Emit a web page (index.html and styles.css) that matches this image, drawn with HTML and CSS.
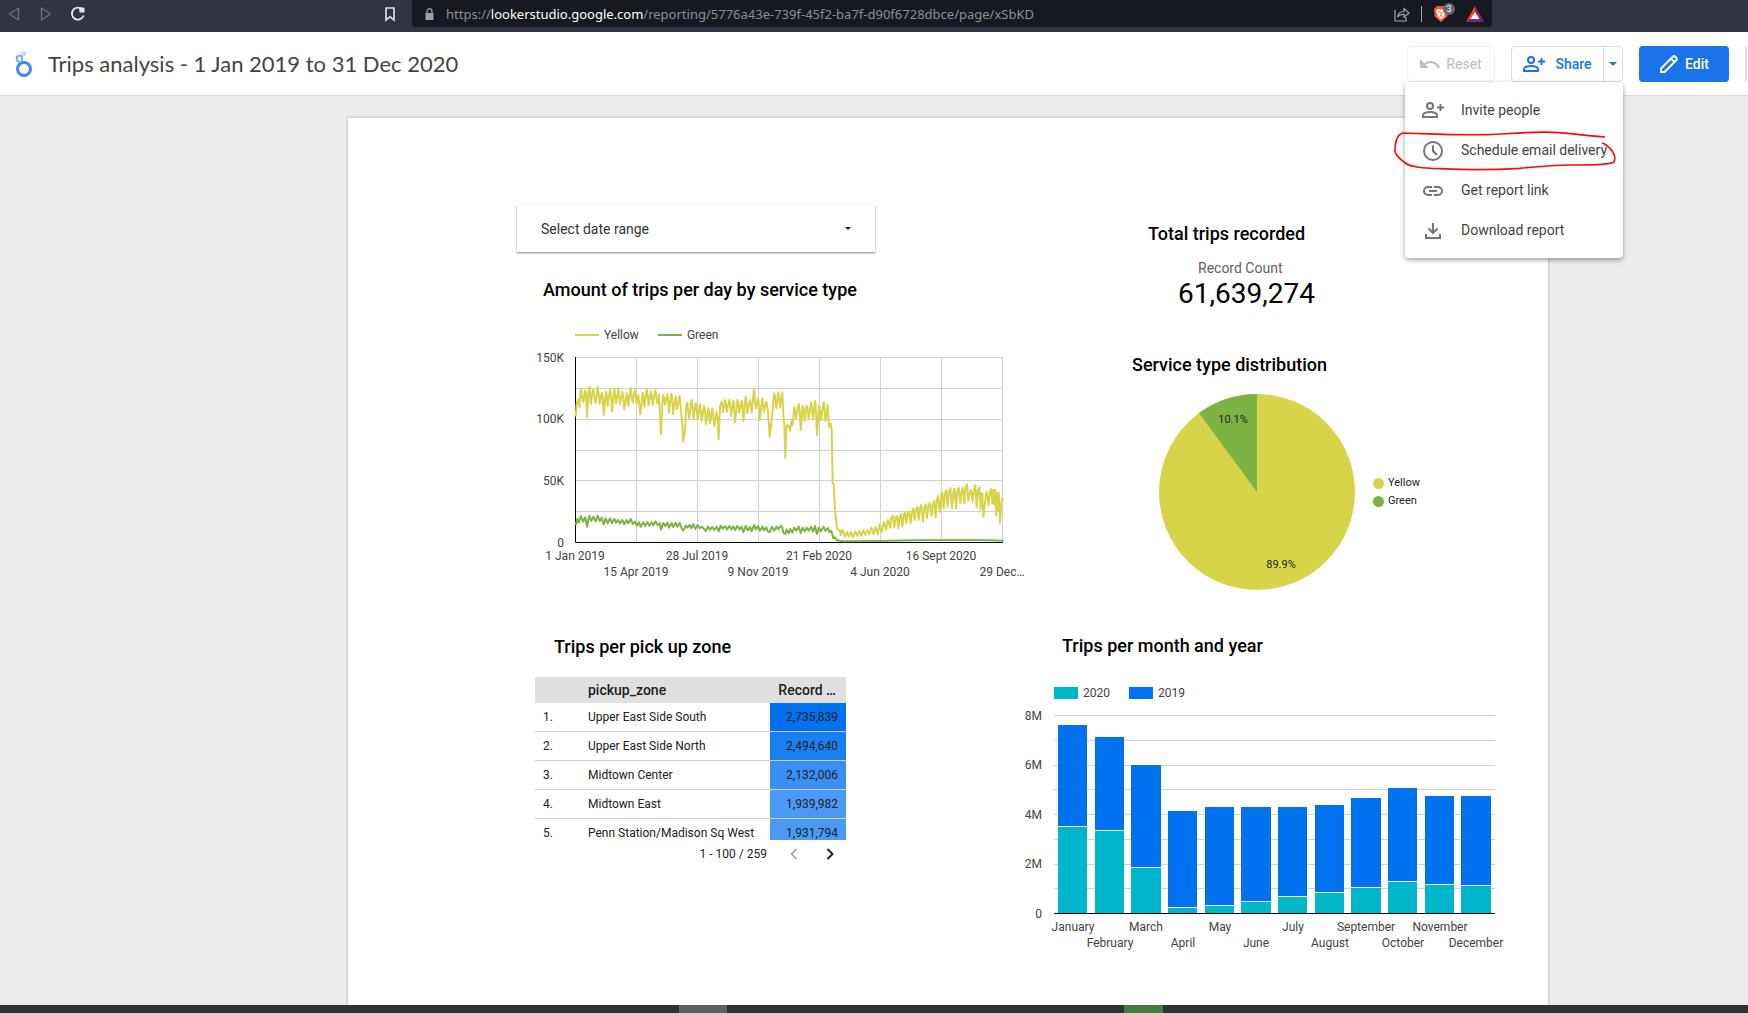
FILE: index.html
```html
<!DOCTYPE html>
<html lang="en">
<head>
<meta charset="utf-8">
<title>Trips analysis - 1 Jan 2019 to 31 Dec 2020</title>
<link rel="stylesheet" href="styles.css">
</head>
<body>
<div class="browser-bar">
  <div class="nav-tools">
    <button class="nav-btn" aria-label="Back"><svg width="12" height="16" viewBox="0 0 12 16"><path d="M10.500 2v12L1.500 8z" fill="none" stroke="#6d6f7c" stroke-width="1.400" stroke-linejoin="round"/></svg></button>
    <button class="nav-btn nav-forward" aria-label="Forward"><svg width="12" height="16" viewBox="0 0 12 16"><path d="M1.500 2v12l9-6z" fill="none" stroke="#6d6f7c" stroke-width="1.400" stroke-linejoin="round"/></svg></button>
    <button class="nav-btn nav-reload" aria-label="Reload"><svg width="16" height="16" viewBox="0 0 16 16"><path d="M12.300 3.500A6 6 0 1 0 13.600 9.500" fill="none" stroke="#e6e6ea" stroke-width="1.900"/><path d="M9 1.200L14.500 1.800V6.500H9.500z" fill="#e6e6ea"/></svg></button>
    <button class="nav-btn nav-bookmark" aria-label="Bookmark"><svg width="12" height="16" viewBox="0 0 12 16"><path d="M2 2h8v12l-4-3.200L2 14z" fill="none" stroke="#dcdce2" stroke-width="1.700"/></svg></button>
  </div>
  <div class="address">
    <svg width="9" height="12" viewBox="0 0 9 12"><path d="M0.500 5h8v7h-8z" fill="#9b9da8"/><path d="M2 5.500V3a2.500 2.300 0 0 1 5 0v2.500" fill="none" stroke="#9b9da8" stroke-width="1.300"/></svg>
    <span class="url">https://<b>lookerstudio.google.com</b>/reporting/5776a43e-739f-45f2-ba7f-d90f6728dbce/page/xSbKD</span>
    <svg width="16" height="16" viewBox="0 0 16 16" fill="none" stroke="#a4a6ae" stroke-width="1.200"><path d="M1 4v11h11v-4"/><path d="M3.500 11C4 7.500 6.500 5.500 10 5.500V2.500L15 7l-5 4.200V8.400C7 8.200 5 9 3.500 11z"/></svg>
    <span class="divider"></span>
    <span class="shield">
      <svg width="16" height="18" viewBox="0 0 16 18"><path d="M4 1h8l3 3-.7 7.500L8 17 1.700 11.500 1 4z" fill="#fb542b"/><path d="M3.500 4.500L6 4l2 .5L10 4l2.500.5.5 2.500-2 2.500L12 11 8 14.500 4 11l1-1.500L3 7z" fill="#fff"/><path d="M4.500 6.500l2.500.8M11.500 6.500L9 7.300M8 7v3M6.500 11.500L8 10.500l1.500 1" stroke="#fb542b" fill="none"/></svg>
      <span class="badge">3</span>
    </span>
    <svg class="bat" width="18" height="16" viewBox="0 0 18 16"><path d="M9 0L0 16l9-6z" fill="#ff4724"/><path d="M9 0l9 16-9-6z" fill="#9e1f63"/><path d="M0 16h18l-9-6z" fill="#662d91"/><path d="M9 6l4.500 7h-9z" fill="#fff"/></svg>
  </div>
</div>

<header class="app-header">
  <svg class="logo" width="18" height="28" viewBox="0 0 18 28" fill="none"><circle cx="9" cy="19" r="6.500" stroke="#4285f4" stroke-width="3"/><path d="M5.500 11.500A3 3 0 1 1 7.200 7.200l-.5 4" stroke="#669df6" stroke-width="1.700"/><circle cx="8.700" cy="3.500" r="1.700" stroke="#aecbfa" stroke-width="1.300"/></svg>
  <h1>Trips analysis - 1 Jan 2019 to 31 Dec 2020</h1>
  <div class="actions">
    <button class="btn reset" disabled>
      <svg width="20" height="12" viewBox="0 0 20 12"><path d="M0 1v9h9L5.700 6.700A8 8 0 0 1 18 10.500l2-.7A10 10 0 0 0 4.200 5.200z" fill="#bdbdbd"/></svg>Reset</button>
    <div class="split">
      <button class="btn share"><svg width="22" height="18" viewBox="0 0 22 18" fill="none" stroke="#1a73e8" stroke-width="2"><circle cx="8" cy="5" r="3"/><path d="M1 16v-1.500C1 12 5 11 8 11s7 1 7 3.500V16zM18.500 3v7M15 6.500h7"/></svg>Share</button>
      <button class="btn share-more" aria-label="More share options"><svg width="8" height="4" viewBox="0 0 8 4"><path d="M0 0h8L4 4z" fill="#1a73e8"/></svg></button>
      <div class="menu" role="menu">
        <button class="menu-item" role="menuitem"><svg width="22" height="22" viewBox="0 0 22 22" fill="none" stroke="#757575" stroke-width="2"><circle cx="8" cy="7" r="3"/><path d="M1 18v-1.500C1 14 5 13 8 13s7 1 7 3.500V18zM18.500 5v7M15 8.500h7"/></svg>Invite people</button>
        <button class="menu-item" role="menuitem"><svg width="22" height="22" viewBox="0 0 22 22" fill="none" stroke="#757575" stroke-width="2"><circle cx="11" cy="12" r="9"/><path d="M11 6.500V12l4 4"/></svg>Schedule email delivery</button>
        <button class="menu-item" role="menuitem"><svg width="22" height="22" viewBox="0 0 22 22" fill="none" stroke="#757575" stroke-width="2"><path d="M10 8H6a4 4 0 0 0 0 8h4M12 8h4a4 4 0 0 1 0 8h-4M7 12h8"/></svg>Get report link</button>
        <button class="menu-item" role="menuitem"><svg width="22" height="22" viewBox="0 0 22 22" fill="none" stroke="#757575" stroke-width="2"><path d="M11 4v10M6.500 9.500L11 14l4.500-4.500M4 15v4h14v-4"/></svg>Download report</button>
        <svg class="scribble" width="227" height="43" viewBox="160 385 681 129" fill="none" stroke="#f80b0b" stroke-width="5" stroke-linecap="round"><path d="M795 412C740 408 690 400 640 398C560 395 500 404 440 405C350 407 260 402 190 400C172 404 166 430 166 455C168 470 185 480 197 490C215 503 250 505 300 507C400 512 480 510 540 506C600 500 640 496 690 496C740 496 800 498 822 488C830 475 822 455 810 445C800 435 795 432 789 430"/></svg>
      </div>
    </div>
    <button class="btn edit"><svg width="20" height="20" viewBox="0 0 20 20"><path d="M2 18v-3.500L14 2.500a1.500 1.500 0 0 1 2 0l1.500 1.500a1.500 1.500 0 0 1 0 2L5.500 18zM12 4.500L15.500 8" fill="none" stroke="#fff" stroke-width="2" stroke-linejoin="round"/></svg>Edit</button>
    <span class="avatar"></span>
  </div>
</header>

<main class="workspace">
  <article class="report">
    <div class="col-left">
      <button class="date-range">Select date range<svg width="6" height="3" viewBox="0 0 6 3"><path d="M0 0h6L3 3z" fill="#212121"/></svg></button>

      <section class="trend">
        <h2>Amount of trips per day by service type</h2>
        <div class="legend trend-legend"><span><i class="line yellow"></i>Yellow</span><span><i class="line green"></i>Green</span></div>
        <svg class="chart" width="494" height="240" viewBox="0 3 494 240" role="img" aria-label="Trips per day">
          <path class="grid" d="M45 17.500H473M45 48.500H473M45 79.500H473M45 110.500H473M45 140.500H473M45 171.500H473M106.500 17V202M167.500 17V202M228.500 17V202M289.500 17V202M350.500 17V202M411.500 17V202M472.500 17V202"/>
          <path class="axis" d="M45.500 17V202.500H473"/>
          <g class="series" transform="scale(.33333)">
            <path stroke="#d8d44a" d="M137 230L140 190L145 178L148 202L153 147L156 168L160 187L165 152L168 155L171 232L175 165L178 140L183 193L187 160L190 148L193 168L197 190L203 140L206 160L209 192L215 158L218 170L221 225L228 155L230 165L233 197L240 148L243 165L246 214L253 145L255 160L258 190L265 148L267 165L270 192L277 155L280 175L283 208L290 160L292 168L295 197L302 143L304 160L308 188L315 150L317 165L320 190L325 165L331 223L338 158L341 172L343 200L350 148L353 165L356 195L363 154L365 165L368 195L376 150L378 163L382 190L387 163L389 210L393 283L397 190L400 165L403 175L405 195L412 163L414 175L417 217L424 162L427 175L429 222L437 170L438 180L441 207L449 168L453 215L456 240L460 305L465 270L469 195L472 188L477 235L485 180L487 195L490 235L497 190L499 200L503 237L510 193L512 205L515 243L522 198L525 210L528 253L535 205L537 215L540 250L547 205L549 220L553 258L560 215L563 240L566 298L570 200L575 185L577 195L579 217L585 180L588 193L590 215L598 180L600 190L603 228L610 182L612 195L615 247L622 180L625 193L627 218L635 182L637 195L640 243L647 170L650 185L652 220L660 180L662 190L665 217L670 170L672 148L675 185L678 205L684 175L686 190L689 240L697 175L699 187L702 215L709 185L714 215L719 290L725 240L733 160L736 175L739 205L745 157L748 175L750 203L757 157L760 225L763 255L766 353L769 265L772 255L776 258L780 272L785 240L788 255L793 202L795 212L798 235L806 192L809 210L812 270L818 197L821 207L824 243L830 197L833 207L836 237L843 187L845 200L849 237L855 183L857 200L861 285L867 197L870 207L873 240L881 187L883 200L886 243L893 195L897 260L902 250L905 270L908 430L911 432L915 510L921 568"/>
            <path stroke="#d8d44a" d="M921 568L926 570L930 572L932 585L938 570L945 590L951 575L957 590L963 575L969 592L976 573L982 588L988 573L994 587L1000 570L1006 585L1012 570L1018 583L1025 563L1031 583L1037 560L1043 583L1049 553L1055 575L1062 545L1068 570L1074 540L1081 563L1083 535L1088 527L1093 562L1097 530L1101 528L1105 565L1109 530L1113 522L1117 560L1121 525L1125 518L1129 550L1133 520L1137 515L1142 550L1146 515L1150 505L1154 540L1158 508L1162 500L1166 540L1170 503L1174 495L1179 545L1183 500L1187 493L1191 535L1195 497L1199 488L1205 527L1208 492L1212 483L1217 532L1220 480L1224 468L1229 515L1233 470L1237 457L1241 505L1245 462L1249 450L1253 500L1257 455L1261 444L1266 505L1270 457L1274 447L1278 505L1282 453L1286 443L1291 490L1295 453L1298 443L1303 490L1306 445L1311 433L1315 482L1319 460L1323 450L1328 485L1332 450L1336 435L1340 502L1344 450L1348 442L1352 508L1354 460L1357 460L1360 530L1366 480L1370 455L1376 495L1380 455L1384 447L1387 490L1390 450L1393 494L1396 450L1398 525L1401 460L1404 512L1406 457L1410 548L1415 480L1421 475"/>
            <path stroke="#7cb342" d="M137 555L142 537L146 548L153 528L159 545L166 532L171 560L178 527L184 543L190 530L197 545L203 527L209 543L215 533L221 553L227 535L233 550L240 535L246 550L253 537L258 548L265 540L270 550L277 540L283 553L290 540L295 550L302 537L308 552L315 545L320 557L327 547L332 560L340 547L345 558L352 546L358 557L365 547L370 556L377 544L383 555L389 550L393 569L400 549L406 558L412 548L417 563L425 549L430 561L437 548L442 560L449 549L455 565L460 572L467 557L472 563L479 555L484 565L490 552L496 567L503 555L509 565L515 560L522 567L527 573L534 560L540 569L547 561L553 570L560 560L566 574L572 557L578 566L585 559L591 568L598 558L604 568L610 559L615 570L622 558L628 568L635 560L640 577L647 558L653 571L660 561L665 574L672 555L678 568L684 558L690 572L697 560L702 571L709 562L714 575L719 577L726 560L732 572L740 560L745 568L752 557L757 563L760 578L766 582L770 568L776 580L781 567L787 578L793 563L799 572L806 560L812 579L818 563L824 574L830 563L836 572L843 560L849 575L855 558L861 582L867 563L873 573L881 560L886 573L893 564L898 576L904 573L910 595L915 592L920 601L940 604L1050 603L1150 601L1300 600L1380 601L1421 602"/>
          </g>
          <g class="label end"><text x="34" y="22">150K</text><text x="34" y="83">100K</text><text x="34" y="145">50K</text><text x="34" y="207">0</text></g>
          <g class="label mid"><text x="45" y="220">1 Jan 2019</text><text x="167" y="220">28 Jul 2019</text><text x="289" y="220">21 Feb 2020</text><text x="411" y="220">16 Sept 2020</text><text x="106" y="236">15 Apr 2019</text><text x="228" y="236">9 Nov 2019</text><text x="350" y="236">4 Jun 2020</text><text x="472" y="236">29 Dec…</text></g>
        </svg>
      </section>

      <section class="zones">
        <h2>Trips per pick up zone</h2>
        <div class="table-view">
          <table>
            <thead><tr><th class="idx"></th><th class="zone">pickup_zone</th><th class="count">Record …</th></tr></thead>
            <tbody>
              <tr><td>1.</td><td>Upper East Side South</td><td class="heat-1">2,735,839</td></tr>
              <tr><td>2.</td><td>Upper East Side North</td><td class="heat-2">2,494,640</td></tr>
              <tr><td>3.</td><td>Midtown Center</td><td class="heat-3">2,132,006</td></tr>
              <tr><td>4.</td><td>Midtown East</td><td class="heat-4">1,939,982</td></tr>
              <tr><td>5.</td><td>Penn Station/Madison Sq West</td><td class="heat-4">1,931,794</td></tr>
            </tbody>
          </table>
        </div>
        <div class="pager"><span>1 - 100 / 259</span>
          <button aria-label="Previous page" disabled><svg width="8" height="12" viewBox="0 0 8 12"><path d="M6.500 1L1.500 6l5 5" fill="none" stroke="#9e9e9e" stroke-width="1.600"/></svg></button>
          <button aria-label="Next page"><svg width="8" height="12" viewBox="0 0 8 12"><path d="M1.500 1l5 5-5 5" fill="none" stroke="#212121" stroke-width="2"/></svg></button>
        </div>
      </section>
    </div>

    <div class="col-right">
      <section class="total">
        <h2>Total trips recorded</h2>
        <p class="kpi-label">Record Count</p>
        <p class="kpi-value">61,639,274</p>
      </section>

      <section class="share-chart">
        <h2>Service type distribution</h2>
        <div class="pie-row">
          <svg width="196" height="196" viewBox="0 0 196 196" role="img" aria-label="Service type distribution">
            <circle cx="98" cy="98" r="98" fill="#d8d44a"/>
            <path d="M98 98V0A98 98 0 0 0 39.900 19.100z" fill="#7cb342"/>
            <g class="slice-label"><text x="74" y="29">10.1%</text><text x="122" y="174">89.9%</text></g>
          </svg>
          <div class="pie-legend"><span><i class="dot yellow"></i>Yellow</span><span><i class="dot green"></i>Green</span></div>
        </div>
      </section>

      <section class="monthly">
        <h2>Trips per month and year</h2>
        <div class="legend month-legend"><span><i class="swatch teal"></i>2020</span><span><i class="swatch blue"></i>2019</span></div>
        <svg class="chart" width="486" height="250" viewBox="14 1 486 250" role="img" aria-label="Trips per month and year">
          <path class="grid" d="M44 15.500H485M44 40.500H485M44 65.500H485M44 89.500H485M44 114.500H485M44 139.500H485M44 164.500H485M44 188.500H485"/>
          <path fill="#0072f0" d="M48 25h29v101h-29zM85 37h29v93h-29zM121 65h30v102h-30zM158 111h29v96h-29zM195 107h29v98h-29zM231 107h30v94h-30zM268 107h29v89h-29zM305 105h29v87h-29zM341 98h30v89h-30zM378 88h29v93h-29zM415 96h29v88h-29zM451 96h30v89h-30z"/>
          <path fill="#fff" d="M48 126h29v1h-29zM85 130h29v1h-29zM121 167h30v1h-30zM158 207h29v1h-29zM195 205h29v1h-29zM231 201h30v1h-30zM268 196h29v1h-29zM305 192h29v1h-29zM341 187h30v1h-30zM378 181h29v1h-29zM415 184h29v1h-29zM451 185h30v1h-30z"/>
          <path fill="#00b6cb" d="M48 127h29V213h-29zM85 131h29V213h-29zM121 168h30V213h-30zM158 208h29V213h-29zM195 206h29V213h-29zM231 202h30V213h-30zM268 197h29V213h-29zM305 193h29V213h-29zM341 188h30V213h-30zM378 182h29V213h-29zM415 185h29V213h-29zM451 186h30V213h-30z"/>
          <path class="axis" d="M44 213.500H485"/>
          <g class="label end"><text x="32" y="20">8M</text><text x="32" y="69">6M</text><text x="32" y="119">4M</text><text x="32" y="168">2M</text><text x="32" y="218">0</text></g>
          <g class="label mid"><text x="63" y="231">January</text><text x="136" y="231">March</text><text x="210" y="231">May</text><text x="283" y="231">July</text><text x="356" y="231">September</text><text x="430" y="231">November</text><text x="100" y="247">February</text><text x="173" y="247">April</text><text x="246" y="247">June</text><text x="320" y="247">August</text><text x="393" y="247">October</text><text x="466" y="247">December</text></g>
        </svg>
      </section>
    </div>
  </article>
</main>
<footer class="taskbar"><i class="task-gray"></i><i class="task-green"></i></footer>
</body>
</html>
```

FILE: styles.css
```css
* { box-sizing: border-box; }
body {
  margin: 0;
  height: 100vh;
  display: flex;
  flex-direction: column;
  overflow: hidden;
  background: #ededed;
  font-family: Roboto, sans-serif;
  color: #212121;
}
button { font: inherit; color: inherit; background: none; border: 0; padding: 0; margin: 0; }
h1, h2, p { margin: 0; }
svg { flex: none; display: block; }

/* Browser bar */
.browser-bar { flex: none; display: flex; align-items: flex-start; height: 32px; background: #323443; }
.nav-tools { display: flex; align-items: center; width: 412px; height: 27px; padding-left: 8px; }
.nav-forward { margin-left: 20px; }
.nav-reload { margin-left: 18px; }
.nav-bookmark { margin-left: auto; margin-right: 16px; }
.address {
  display: flex;
  align-items: center;
  width: calc(100% - 668px);
  height: 27px;
  padding: 0 8px 0 13px;
  border-radius: 0 0 4px 4px;
  background: #171920;
}
.url { flex: 1; margin-left: 12px; font-family: "Noto Sans", sans-serif; font-size: 13px; line-height: 18px; color: #8d8f98; white-space: nowrap; }
.url b { font-weight: 400; color: #fff; }
.divider { width: 1px; height: 16px; margin: 0 11px; background: #a4a6ae; }
.shield { position: relative; width: 33px; }
.badge { position: absolute; left: 10px; top: -2px; width: 12px; height: 12px; border-radius: 6px; background: #62646f; color: #fff; font-size: 9px; line-height: 12px; text-align: center; }

/* Application header */
.app-header { flex: none; display: flex; align-items: center; height: 64px; padding-left: 15px; background: #fff; border-bottom: 1px solid #dadada; }
.logo { margin-right: 15px; }
h1 { font-family: Lato, sans-serif; font-size: 22px; font-weight: 400; line-height: 28px; color: #444; white-space: nowrap; }
.actions { display: flex; margin-left: auto; }
.btn { display: flex; align-items: center; justify-content: center; height: 36px; border-radius: 4px; font-size: 14px; font-weight: 500; line-height: 20px; }
.reset { width: 88px; gap: 6px; margin-right: 16px; border: 1px solid #efefef; color: #bdbdbd; font-weight: 400; }
.split { position: relative; display: flex; width: 112px; margin-right: 16px; border: 1px solid #dadce0; border-radius: 4px; color: #1a73e8; }
.share { flex: 1; height: 34px; gap: 10px; }
.share-more { width: 19px; height: 34px; border-left: 1px solid #dadce0; border-radius: 0; }
.edit { width: 90px; gap: 6px; background: #1a73e8; color: #fff; }
.avatar { width: 3px; height: 36px; margin-left: 16px; border-left: 2px solid #dadce0; border-radius: 18px 0 0 18px; }

.menu { position: absolute; z-index: 2; top: 35px; right: -1px; width: 218px; padding: 8px 0; border-radius: 4px; background: #fff; box-shadow: 0 2px 5px rgba(0, 0, 0, .38); }
.menu-item { display: flex; align-items: center; width: 100%; height: 40px; padding-left: 17px; gap: 17px; color: #424242; font-size: 14px; line-height: 20px; white-space: nowrap; }
.scribble { position: absolute; left: -12px; top: 46px; }

/* Report canvas */
.workspace { flex: 1; min-height: 0; display: grid; grid-template-columns: minmax(0, 348fr) minmax(0, 1200px) minmax(0, 200fr); padding-top: 22px; }
.report { grid-column: 2; display: flex; padding: 87px 0 0 169px; background: #fff; box-shadow: 0 0 3px rgba(0, 0, 0, .3); }
.col-left { flex: none; width: 507px; }
.col-right { flex: 1; }
h2 { font-size: 18px; font-weight: 500; line-height: 24px; color: #000; white-space: nowrap; }

.date-range { display: flex; align-items: center; justify-content: space-between; width: 358px; height: 47px; padding: 0 24px; background: #fff; box-shadow: 0 1px 2px rgba(0, 0, 0, .5); font-size: 14px; color: #333; }
.legend { display: flex; height: 16px; font-size: 12px; line-height: 16px; color: #424242; }
.legend span { display: flex; align-items: center; }
.line { width: 24px; height: 2px; margin-right: 5px; }
.yellow { background: #d8d44a; }
.green { background: #7cb342; }
.teal { background: #00b6cb; }
.blue { background: #0072f0; }
.swatch { width: 24px; height: 12px; margin-right: 5px; }
.chart { overflow: visible; }
.grid { stroke: #d0d0d0; fill: none; }
.axis { stroke: #000; fill: none; }
.series { fill: none; stroke-width: 6; stroke-linejoin: round; }
.label { font-size: 12px; fill: #424242; }
.end { text-anchor: end; }
.mid { text-anchor: middle; }

.trend { margin-top: 26px; }
.trend h2 { margin-left: 26px; }
.trend-legend { margin: 25px 0 0 58px; gap: 19px; }
.trend .chart { margin-left: 13px; }

.zones { margin: 52px 0 0 18px; width: 311px; }
.zones h2 { margin-left: 19px; }
.table-view { height: 163px; margin-top: 18px; overflow: hidden; }
table { width: 100%; table-layout: fixed; border-collapse: separate; border-spacing: 0; font-size: 12px; }
th { height: 26px; padding: 0; background: #e0e0e0; font-size: 14px; font-weight: 500; line-height: 20px; text-align: left; }
.idx { width: 53px; }
.count { width: 76px; padding-right: 10px; text-align: right; white-space: nowrap; }
td { height: 29px; padding: 0; border-bottom: 1px solid #d0d0d0; line-height: 16px; white-space: nowrap; }
td:first-child { padding-left: 8px; }
td:last-child { padding-right: 8px; text-align: right; }
.heat-1 { background: #0072f0; }
.heat-2 { background: #1a80f2; }
.heat-3 { background: #3890f4; }
.heat-4 { background: #4a9af5; }
.pager { display: flex; align-items: center; justify-content: flex-end; height: 28px; padding-right: 12px; font-size: 12px; }
.pager span { margin-right: 23px; }
.pager button + button { margin-left: 28px; }

.total { margin-top: 17px; }
.total h2 { margin-left: 124px; }
.kpi-label { margin: 14px 0 0 174px; font-size: 14px; line-height: 16px; color: #616161; }
.kpi-value { margin: 2px 0 0 154px; font-size: 28px; line-height: 32px; color: #000; }
.share-chart { margin-top: 43px; }
.share-chart h2 { margin-left: 108px; }
.pie-row { display: flex; align-items: center; gap: 18px; margin: 17px 0 0 135px; }
.slice-label { font-size: 11px; fill: #212121; text-anchor: middle; }
.pie-legend { font-size: 11px; line-height: 18px; }
.pie-legend span { display: flex; align-items: center; }
.dot { width: 11px; height: 11px; margin-right: 4px; border-radius: 50%; }
.monthly { margin-top: 44px; }
.monthly h2 { margin-left: 38px; }
.month-legend { margin: 27px 0 0 30px; gap: 19px; }

/* Taskbar strip */
.taskbar { flex: none; position: relative; z-index: 1; display: flex; height: 8px; background: #303234; }
.task-gray { width: 48px; margin-left: 679px; background: #5f5f5f; }
.task-green { width: 39px; margin-left: 397px; background: #477941; }
```
